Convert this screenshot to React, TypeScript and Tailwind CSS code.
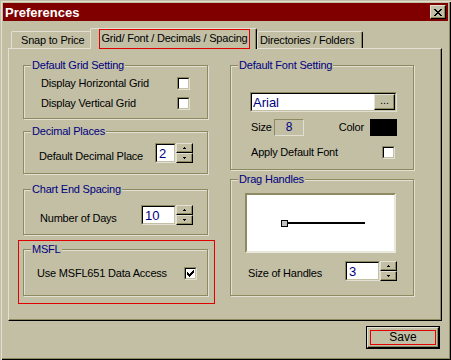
const raised =
  "border border-t-[#e1e0d2] border-l-[#e1e0d2] border-r-black border-b-black bg-[#c2bfa5] shadow-[inset_-1px_-1px_0_#8d8961]";
const sunkenOuter = "border border-t-[#8d8961] border-l-[#8d8961] border-r-[#e1e0d2] border-b-[#e1e0d2]";
const sunkenInner = "border border-t-black border-l-black border-r-[#c2bfa5] border-b-[#c2bfa5] bg-white";

function Check() {
  return (
    <svg width="7" height="7" viewBox="0 0 7 7" shapeRendering="crispEdges">
      <path
        d="M6 0h1v1h-1z M5 1h2v1h-2z M0 2h1v1h-1z M4 2h3v1h-3z M0 3h2v1h-2z M3 3h3v1h-3z M0 4h5v1h-5z M1 5h3v1h-3z M2 6h1v1h-1z"
        fill="#000"
      />
    </svg>
  );
}

function Checkbox({ checked = false }: { checked?: boolean }) {
  return (
    <div className={`w-[13px] h-[13px] shrink-0 ${sunkenOuter}`}>
      <div className={`size-full flex items-center justify-center ${sunkenInner}`}>{checked && <Check />}</div>
    </div>
  );
}

function Spinner() {
  return (
    <div className="flex flex-col w-[17px] h-[20px] shrink-0">
      <div className={`h-[10px] flex items-center justify-center ${raised}`}>
        <svg width="3" height="2" viewBox="0 0 3 2" shapeRendering="crispEdges">
          <path d="M1 0h1v1h-1z M0 1h3v1h-3z" fill="#000" />
        </svg>
      </div>
      <div className={`h-[10px] flex items-center justify-center ${raised}`}>
        <svg width="3" height="2" viewBox="0 0 3 2" shapeRendering="crispEdges">
          <path d="M0 0h3v1h-3z M1 1h1v1h-1z" fill="#000" />
        </svg>
      </div>
    </div>
  );
}

function NumberField({ value, width }: { value: string; width: string }) {
  return (
    <div className="flex items-start">
      <div className={`h-[20px] ${width} ${sunkenOuter}`}>
        <div className={`size-full flex items-center pl-[2px] text-[#000080] text-[13px] tracking-normal ${sunkenInner}`}>
          {value}
        </div>
      </div>
      <Spinner />
    </div>
  );
}

function Group({ label, className, children }: { label: string; className: string; children?: React.ReactNode }) {
  return (
    <div className={`relative border border-[#8d8961] shadow-[inset_1px_1px_0_#e1e0d2,1px_1px_0_#e1e0d2] ${className}`}>
      <span className="absolute left-[7px] top-[-8px] bg-[#c2bfa5] px-[1px] leading-[14px] text-[#000080] whitespace-nowrap">
        {label}
      </span>
      {children}
    </div>
  );
}

export default function App() {
  return (
    <div className="w-[451px] h-[360px] bg-[#c2bfa5] p-[3px] flex flex-col text-[11px] leading-[13px] tracking-[-0.2px] text-black font-['Liberation_Sans',Arial,sans-serif] shadow-[inset_1px_1px_0_#c2bfa5,inset_2px_2px_0_#e1e0d2,inset_-1px_-1px_0_#000,inset_-2px_-2px_0_#8d8961]">
      {/* title bar */}
      <div className="h-[18px] shrink-0 bg-[#800000] flex items-center justify-between pl-[2px] pr-[2px]">
        <span className="font-bold text-[13px] leading-none tracking-normal text-white">Preferences</span>
        <div className={`w-[16px] h-[14px] flex items-center justify-center ${raised}`}>
          <svg width="8" height="7" viewBox="0 0 8 7" shapeRendering="crispEdges">
            <path
              d="M0 0h2v1h-2z M6 0h2v1h-2z M1 1h2v1h-2z M5 1h2v1h-2z M2 2h4v1h-4z M3 3h2v1h-2z M2 4h4v1h-4z M1 5h2v1h-2z M5 5h2v1h-2z M0 6h2v1h-2z M6 6h2v1h-2z"
              fill="#000"
            />
          </svg>
        </div>
      </div>

      {/* tabs */}
      <div className="h-[27px] shrink-0 flex items-end pl-[8px] whitespace-nowrap">
        <div className="w-[79px] h-[17px] border-l border-t border-[#e1e0d2] rounded-tl-[2px] flex items-center pl-[9px] pt-[1px]">
          Snap to Price
        </div>
        <div className="relative z-10 w-[167px] h-[21px] -mb-[1px] bg-[#c2bfa5] border-l border-t border-t-[#e1e0d2] border-l-[#e1e0d2] border-r border-r-black rounded-t-[2px] shadow-[inset_-1px_0_0_#8d8961]">
          <div className="ml-[8px] w-[151px] h-[20px] border border-[#e00000] flex items-center justify-center pb-[1px]">
            Grid/ Font / Decimals / Spacing
          </div>
        </div>
        <div className="w-[106px] h-[17px] border-l border-t border-t-[#e1e0d2] border-l-[#e1e0d2] border-r border-r-black rounded-t-[2px] shadow-[inset_-1px_0_0_#8d8961] flex items-center pl-[2px] pt-[1px]">
          Directories / Folders
        </div>
      </div>

      {/* panel */}
      <div className="ml-[5px] w-[434px] h-[273px] shrink-0 border border-t-[#e1e0d2] border-l-[#e1e0d2] border-r-black border-b-black shadow-[inset_-1px_-1px_0_#8d8961] flex pl-[14px] pt-[16px]">
        {/* left column */}
        <div className="w-[185px] flex flex-col">
          <Group label="Default Grid Setting" className="h-[54px] pt-[7px]">
            <div className="h-[20px] flex items-center justify-between pl-[17px] pr-[17px]">
              <span>Display Horizontal Grid</span>
              <Checkbox />
            </div>
            <div className="h-[20px] flex items-center justify-between pl-[17px] pr-[17px]">
              <span>Display Vertical Grid</span>
              <Checkbox />
            </div>
          </Group>

          <Group label="Decimal Places" className="mt-[12px] h-[43px] pt-[11px]">
            <div className="h-[20px] flex items-center justify-between pl-[15px] pr-[14px]">
              <span className="pt-[6px]">Default Decimal Place</span>
              <NumberField value="2" width="w-[21px]" />
            </div>
          </Group>

          <Group label="Chart End Spacing" className="mt-[15px] h-[46px] pt-[15px]">
            <div className="h-[20px] flex items-center justify-between pl-[16px] pr-[14px]">
              <span className="pt-[6px]">Number of Days</span>
              <NumberField value="10" width="w-[35px]" />
            </div>
          </Group>

          <div className="mt-[5px] -ml-[5px] w-[197px] h-[64px] border border-[#e00000] pt-[8px] pl-[4px]">
            <Group label="MSFL" className="w-[185px] h-[47px] pt-[13px]">
              <div className="h-[20px] flex items-center justify-between pl-[13px] pr-[10px]">
                <span>Use MSFL651 Data Access</span>
                <Checkbox checked />
              </div>
            </Group>
          </div>
        </div>

        {/* right column */}
        <div className="ml-[22px] w-[184px] flex flex-col">
          <Group label="Default Font Setting" className="h-[105px] pt-[26px] pl-[19px] pr-[16px]">
            <div className={`h-[20px] ${sunkenOuter}`}>
              <div className={`size-full flex items-center ${sunkenInner}`}>
                <span className="flex-1 pl-[1px] text-[#000080] text-[13px] tracking-normal">Arial</span>
                <div className={`w-[21px] h-full flex items-center justify-center pb-[3px] tracking-normal ${raised}`}>...</div>
              </div>
            </div>
            <div className="mt-[7px] h-[17px] flex items-center">
              <span className="w-[24px] pl-[1px]">Size</span>
              <div className={`w-[30px] h-[17px] flex items-center justify-center text-[#000080] text-[12px] ${sunkenOuter}`}>
                8
              </div>
              <span className="flex-1" />
              <span>Color</span>
              <div className="ml-[6px] w-[27px] h-[17px] bg-black" />
            </div>
            <div className="mt-[10px] h-[13px] flex items-center justify-between pr-[2px]">
              <span className="pl-[1px]">Apply Default Font</span>
              <Checkbox />
            </div>
          </Group>

          <Group label="Drag Handles" className="mt-[9px] h-[117px] pt-[13px] pl-[14px] pr-[16px]">
            <div className="w-[151px] h-[60px] bg-white border-2 border-t-[#8d8961] border-l-[#8d8961] border-r-[#e9e8dc] border-b-[#e9e8dc]">
              <svg width="147" height="56" viewBox="0 0 147 56" shapeRendering="crispEdges">
                <line x1="40" y1="28" x2="118" y2="28" stroke="#000" strokeWidth="2" />
                <rect x="34.5" y="25.5" width="6" height="6" fill="#c0c0c0" stroke="#000" />
              </svg>
            </div>
            <div className="mt-[8px] h-[20px] flex items-center justify-between">
              <span className="pl-[3px] pt-[5px]">Size of Handles</span>
              <NumberField value="3" width="w-[35px]" />
            </div>
          </Group>
        </div>
      </div>

      {/* buttons */}
      <div className="mt-[5px] flex justify-end pr-[8px]">
        <div className="w-[74px] h-[23px] border border-black">
          <div className={`size-full p-[2px] ${raised}`}>
            <div className="w-[66px] h-[15px] border border-[#e00000] flex items-center justify-center text-[12px] tracking-normal">
              Save
            </div>
          </div>
        </div>
      </div>
    </div>
  );
}
